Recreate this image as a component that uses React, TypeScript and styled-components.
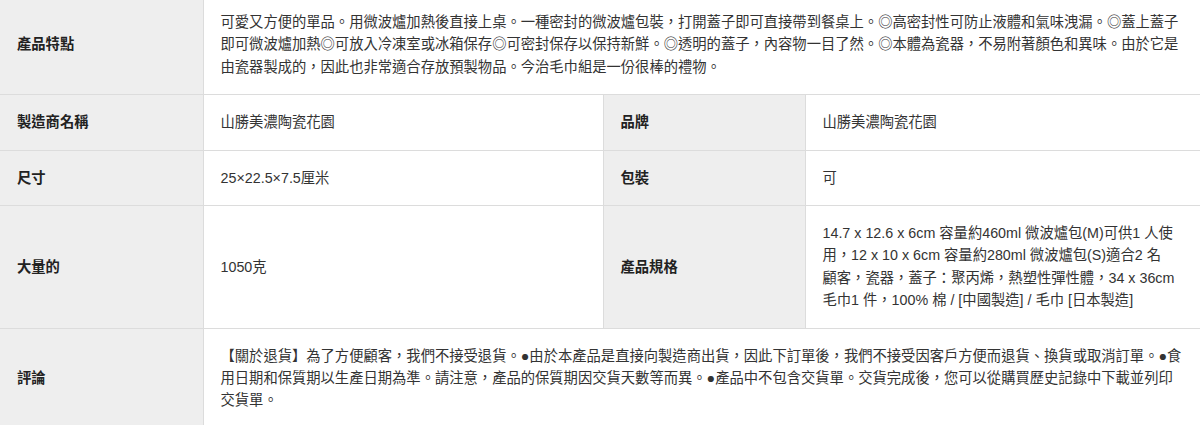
import React from "react";
import styled, { createGlobalStyle } from "styled-components";

const GlobalStyle = createGlobalStyle`
  body {
    margin: 0;
    background: #fff;
    overflow: hidden;
    font-family: "Liberation Sans", "Noto Sans CJK TC", sans-serif;
  }
`;

// the page is scrolled a few px down in the reference
const Wrapper = styled.div`
  width: 1200px;
  margin-top: -6px;
`;

const SpecTable = styled.table`
  width: 1200px;
  table-layout: fixed;
  border-collapse: collapse;
  font-size: 14.3px;
  line-height: 22.4px;
  color: #333;
`;

const Col = styled.col<{ $width: number }>`
  width: ${(p) => p.$width}px;
`;

const NoWrap = styled.span`
  white-space: nowrap;
`;

const Cell = styled.td`
  padding: 16px 17px;
  vertical-align: middle;
  border-top: 1px solid #dcdcdc;
  border-bottom: 1px solid #dcdcdc;
`;

const LabelCell = styled(Cell).attrs({ as: "th" })`
  background: #eeeeee;
  font-weight: bold;
  text-align: left;
  color: #222;
  border-left: 1px solid #dcdcdc;
  &:first-child {
    border-left: none;
  }
`;

const ValueCell = styled(Cell)`
  background: #fff;
  border-left: 1px solid #dcdcdc;
  word-break: break-all;
`;

interface ISpecRow {
  label: string;
  value: React.ReactNode;
  label2?: string;
  value2?: React.ReactNode;
}

const colWidths = [203, 400, 202, 395];

const rows: ISpecRow[] = [
  {
    label: "產品特點",
    value:
      "可愛又方便的單品。用微波爐加熱後直接上桌。一種密封的微波爐包裝，打開蓋子即可直接帶到餐桌上。◎高密封性可防止液體和氣味洩漏。◎蓋上蓋子即可微波爐加熱◎可放入冷凍室或冰箱保存◎可密封保存以保持新鮮。◎透明的蓋子，內容物一目了然。◎本體為瓷器，不易附著顏色和異味。由於它是由瓷器製成的，因此也非常適合存放預製物品。今治毛巾組是一份很棒的禮物。",
  },
  {
    label: "製造商名稱",
    value: "山勝美濃陶瓷花園",
    label2: "品牌",
    value2: "山勝美濃陶瓷花園",
  },
  {
    label: "尺寸",
    value: "25×22.5×7.5厘米",
    label2: "包裝",
    value2: "可",
  },
  {
    label: "大量的",
    value: "1050克",
    label2: "產品規格",
    value2: (
      <>
        14.7 x 12.6 x 6cm 容量約460ml 微波爐包(M)可供1 人使用，12 x 10 x 6cm
        容量約280ml 微波爐包(S)適合2 名<NoWrap>顧客，</NoWrap>
        瓷器，蓋子：聚丙烯，熱塑性彈性體，34 x 36cm 毛巾1 件，100% 棉 /
        [中國製造] / 毛巾 [日本製造]
      </>
    ),
  },
  {
    label: "評論",
    value:
      "【關於退貨】為了方便顧客，我們不接受退貨。●由於本產品是直接向製造商出貨，因此下訂單後，我們不接受因客戶方便而退貨、換貨或取消訂單。●食用日期和保質期以生產日期為準。請注意，產品的保質期因交貨天數等而異。●產品中不包含交貨單。交貨完成後，您可以從購買歷史記錄中下載並列印交貨單。",
  },
];

const App: React.FC = () => {
  return (
    <>
      <GlobalStyle />
      <Wrapper>
        <SpecTable>
          <colgroup>
            {colWidths.map((w, i) => (
              <Col key={i} $width={w} />
            ))}
          </colgroup>
          <tbody>
            {rows.map((row) => (
              <tr key={row.label}>
                <LabelCell>{row.label}</LabelCell>
                {row.label2 ? (
                  <>
                    <ValueCell>{row.value}</ValueCell>
                    <LabelCell>{row.label2}</LabelCell>
                    <ValueCell>{row.value2}</ValueCell>
                  </>
                ) : (
                  <ValueCell colSpan={3}>{row.value}</ValueCell>
                )}
              </tr>
            ))}
          </tbody>
        </SpecTable>
      </Wrapper>
    </>
  );
};

export default App;
